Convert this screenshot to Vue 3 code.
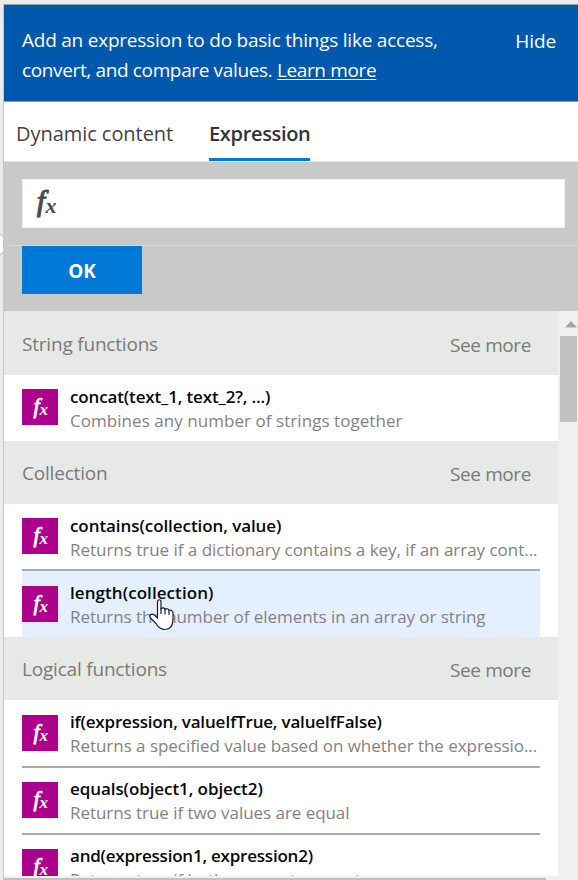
<script setup>
const groups = [
  {
    title: 'String functions',
    items: [
      { name: 'concat(text_1, text_2?, ...)', desc: 'Combines any number of strings together', ns: -0.14, ds: 0.05 },
    ],
  },
  {
    title: 'Collection',
    items: [
      { name: 'contains(collection, value)', desc: 'Returns true if a dictionary contains a key, if an array cont...', ns: -0.07, ds: -0.025 },
      { name: 'length(collection)', desc: 'Returns the number of elements in an array or string', ns: 0.07, ds: -0.06, hover: true },
    ],
  },
  {
    title: 'Logical functions',
    items: [
      { name: 'if(expression, valueIfTrue, valueIfFalse)', desc: 'Returns a specified value based on whether the expressio...', ns: -0.19, ds: -0.04 },
      { name: 'equals(object1, object2)', desc: 'Returns true if two values are equal', ns: -0.08, ds: -0.05 },
      { name: 'and(expression1, expression2)', desc: 'Returns true if both parameters are true', ns: -0.22, ds: -0.05 },
    ],
  },
]
</script>

<template>
  <div class="page">
    <div class="callout"></div>
    <div class="panel">
      <header class="banner">
        <p class="intro">
          <span class="l1">Add an expression to do basic things like access,</span><br />
          <span class="l2">convert, and compare values. <a>Learn more</a></span>
        </p>
        <span class="hide">Hide</span>
      </header>
      <nav class="tabs">
        <span class="tab dyn">Dynamic content</span>
        <span class="tab active">Expression</span>
      </nav>
      <section class="editor">
        <div class="input">
          <svg width="32" height="34" viewBox="0 0 32 34">
            <text class="glyph f dark" x="8" y="23" font-size="29">f</text>
            <text class="glyph dark" x="16.500" y="25" font-size="22">x</text>
          </svg>
        </div>
        <div class="actions"><button class="ok">OK</button></div>
      </section>
      <div class="body">
        <div class="list">
          <section v-for="g in groups" :key="g.title" class="group">
            <div class="heading">
              <span class="title">{{ g.title }}</span><span class="more">See more</span>
            </div>
            <div class="items">
              <div v-for="i in g.items" :key="i.name" class="item" :class="{ hover: i.hover }">
                <svg class="icon" width="36" height="36" viewBox="0 0 36 36">
                  <text class="glyph f" x="11.500" y="24" font-size="22">f</text>
                  <text class="glyph" x="17.500" y="26" font-size="17">x</text>
                </svg>
                <div class="copy">
                  <div class="name"><span :style="{ letterSpacing: i.ns + 'px' }">{{ i.name }}</span></div>
                  <div class="desc"><span :style="{ letterSpacing: i.ds + 'px' }">{{ i.desc }}</span></div>
                </div>
              </div>
            </div>
          </section>
        </div>
        <div class="scroll">
          <svg width="12" height="7" viewBox="0 0 12 7"><path d="M0 6.500 6 0l6 6.500z" fill="#a3a3a3" /></svg>
          <div class="thumb"></div>
        </div>
      </div>
      <div class="hscroll"><div class="hthumb"></div></div>
    </div>
    <svg class="cursor" width="27" height="33" viewBox="0 0 27 33">
      <path d="M8.500 4C8.500 1 12 1 12 4V11C13 9.500 15.500 9.500 16 11.500C17 10.200 19.500 10.500 20 12.500C21.500 11.700 24 12.300 24 15V21C24 27 21.500 31.500 16 31.500C11.500 31.500 9 29 7 25.500L1.500 20C-0.500 17.500 2.500 14.800 5 16.800L8.500 20Z" fill="#fff" stroke="#1c1c2b" stroke-width="1.200" stroke-linejoin="round" />
      <path d="M12 10v6M16 11.500v5M20 12.500v4.500" stroke="#1c1c2b" stroke-width="1.200" fill="none" />
    </svg>
  </div>
</template>

<style>
body { margin: 0; overflow: hidden; }
</style>
<style scoped>
* { box-sizing: border-box; }
.page { position: relative; width: 578px; height: 880px; padding: 4px 0 0 3px; background: #ebebeb; overflow: hidden; font-family: "Open Sans", "Noto Sans", sans-serif; }
.callout { position: absolute; left: -9px; top: 236px; width: 17px; height: 17px; background: #fff; border: 1px solid #c6c6c6; transform: rotate(45deg); }
.panel { position: relative; height: 876px; border-left: 1px solid #c6c8c7; border-top: 1px solid #8ea3b8; display: flex; flex-direction: column; background: #fff; }
.banner { height: 97px; flex: none; background: #0058ad; border-bottom: 1px solid #6fa0d0; color: #fff; display: flex; justify-content: space-between; padding: 20px 22px 0 18px; font-size: 19px; line-height: 30px; white-space: nowrap; }
.intro { margin: 0; }
.l1 { letter-spacing: -0.23px; }
.l2 { letter-spacing: -0.36px; }
.hide { padding-top: 1px; letter-spacing: -0.1px; }
.intro a { text-decoration: underline; text-decoration-thickness: 1px; text-underline-offset: 2px; }
.tabs { height: 60px; flex: none; display: flex; padding-left: 12px; gap: 36px; font-size: 20px; line-height: 63px; color: #444; border-bottom: 1px solid #e2e4e2; white-space: nowrap; }
.tab { height: 59px; }
.dyn { width: 157px; letter-spacing: -0.05px; }
.active { width: 101px; font-weight: 600; color: #333; border-bottom: 3px solid #0078d7; letter-spacing: -0.33px; }
.editor { height: 149px; flex: none; background: #c8cac7; padding: 17px 13px 0 18px; }
.input { height: 49px; background: #fff; border: 1px solid #f1f2f0; padding: 8px 6px; }
.actions { margin: 17px -13px 0 -18px; padding-left: 18px; border-top: 1px solid #d6d8d5; }
.ok { display: block; width: 120px; height: 48px; border: 0; padding: 1px 0 0; background: #0078d7; color: #fff; font: 700 19px "Open Sans", sans-serif; }
.body { height: 565px; flex: none; display: flex; overflow: hidden; }
.list { width: 554px; flex: none; overflow: hidden; }
.heading { height: 64px; background: #e7e9e6; display: flex; justify-content: space-between; padding: 0 27px 0 18px; font-size: 19px; line-height: 66px; color: #7b7979; }
.title { letter-spacing: -0.2px; }
.more { letter-spacing: -0.4px; padding-top: 1px; }
.group:nth-child(n+2) .heading { height: 63px; line-height: 65px; }
.items { padding: 0 18px; }
.item { height: 67.3px; border-bottom: 2px solid #aaa; display: flex; align-items: flex-start; gap: 12px; padding-top: 14.400px; }
.item:last-child { border-bottom: 0; height: 66px; }
.hover { background: #e4f0ff; }
.icon { background: #ac008c; flex: none; }
.glyph { font-family: "Liberation Serif", serif; font-style: italic; font-weight: 700; fill: #fff; }
.f { font-weight: 400; stroke: #fff; stroke-width: 0.8px; }
.dark { fill: #4a4a4a; }
.f.dark { stroke: #4a4a4a; stroke-width: 1.200px; }
.copy { margin-top: -4.900px; white-space: nowrap; font-size: 17px; line-height: 24px; }
.name { color: #080808; font-weight: 600; }
.desc { color: #858181; }
.scroll { width: 20px; flex: none; background: #f0f0f0; padding: 10px 0 0 7px; display: flex; flex-direction: column; }
.thumb { width: 17px; height: 86px; flex: none; margin: 8px 0 0 -5px; background: #c1c1c1; }
.hscroll { height: 4px; background: #f0f0f0; padding-top: 2px; }
.hthumb { width: 542px; height: 2px; background: #c1c1c1; }
.cursor { position: absolute; left: 149px; top: 598px; }
</style>
